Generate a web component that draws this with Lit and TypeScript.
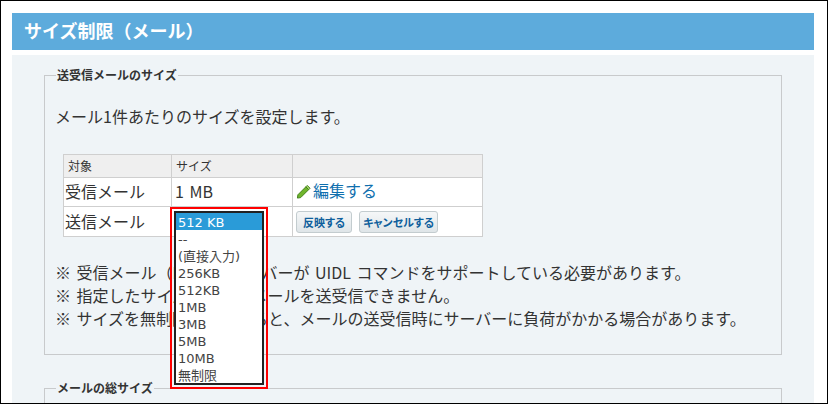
import { LitElement, html, css } from "lit";
import { customElement } from "lit/decorators.js";

const OPTIONS = ["--", "(直接入力)", "256KB", "512KB", "1MB", "3MB", "5MB", "10MB", "無制限"];

@customElement("app-root")
export class AppRoot extends LitElement {
  static styles = css`
    :host {
      display: block;
      width: 828px;
      height: 404px;
      box-sizing: border-box;
      border: 1px solid #000;
      background: #fff;
      overflow: hidden;
      font-family: "Noto Sans CJK JP", "Noto Sans", sans-serif;
      color: #333;
    }
    .wrap { padding: 12px 13px 0 11px; position: relative; }
    .title {
      background: #5dabdc;
      color: #fff;
      height: 37px;
      line-height: 35px;
      padding-left: 12px;
      font-size: 18px;
      font-weight: 700;
    }
    .panel {
      margin-top: 5px;
      background: #eff4f7;
      padding: 12px 32px 0 32px;
      height: 400px;
    }
    fieldset {
      margin: 0;
      padding: 0 10px;
      border: 1px solid #c8cacc;
      height: 288px;
      box-sizing: border-box;
    }
    fieldset + fieldset { margin-top: 25px; }
    legend {
      padding: 0 1px;
      margin-left: 1px;
      font-size: 12px;
      line-height: 16px;
      font-weight: 700;
      color: #333;
    }
    .desc { margin: 22px 0 0; font-size: 16px; line-height: 22px; }
    table {
      margin: 27px 0 0 8px;
      border-collapse: collapse;
      width: 420px;
      table-layout: fixed;
      background: #fff;
      font-size: 16px;
      word-spacing: 2px;
    }
    col.c1 { width: 108px; }
    col.c2 { width: 121px; }
    th, td {
      border: 1px solid #cfcfcf;
      padding: 0 0 0 3px;
      text-align: left;
      font-weight: 400;
      line-height: 18px;
    }
    th { background: #efefef; font-size: 12px; height: 22px; padding-left: 4px; }
    tr.r1 td { height: 26px; padding-bottom: 2px; }
    tr.r2 td { height: 29px; }
    tr.r2 td.name { height: 27px; padding-bottom: 2px; }
    td.name { padding-left: 1px; }
    .edit { color: #0f6fae; display: inline-flex; align-items: center; gap: 2px; }
    .edit svg { display: block; margin-top: 2px; }
    .btns { display: flex; gap: 7px; }
    button {
      font-family: inherit;
      font-size: 11px;
      font-feature-settings: "palt";
      font-weight: 700;
      color: #0f5f9c;
      height: 22px;
      width: 56px;
      margin: 0;
      padding: 0;
      border: 1px solid #c3cccf;
      border-radius: 3px;
      background: linear-gradient(#f5f7f8, #dfe5e8);
      line-height: 20px;
    }
    button.wide { width: 79px; }
    .notes { margin: 24px 0 0; padding: 0; list-style: none; font-size: 16px; line-height: 23px; word-spacing: 2px; }
    .notes li { white-space: nowrap; }
    .callout {
      position: absolute;
      left: 169px;
      top: 206px;
      width: 98px;
      height: 182px;
      box-sizing: border-box;
      border: 2px solid #f00;
      padding: 2px;
    }
    .list {
      box-sizing: border-box;
      height: 100%;
      border: 2px solid #222;
      background: #fff;
      font-family: "DejaVu Sans", "Noto Sans CJK JP", sans-serif;
      font-size: 13px;
      line-height: 19px;
      color: #444;
    }
    .list div { padding-left: 2px; height: 17px; white-space: nowrap; }
    .list .sel { background: #2a9bd8; color: #fff; }
  `;

  render() {
    return html`
      <div class="wrap">
        <div class="title">サイズ制限（メール）</div>
        <div class="panel">
          <fieldset>
            <legend>送受信メールのサイズ</legend>
            <p class="desc">メール1件あたりのサイズを設定します。</p>
            <table>
              <colgroup><col class="c1" /><col class="c2" /><col /></colgroup>
              <tr><th>対象</th><th>サイズ</th><th></th></tr>
              <tr class="r1">
                <td class="name">受信メール</td>
                <td>1 MB</td>
                <td>
                  <span class="edit">
                    <svg width="15" height="15" viewBox="0 0 16 16">
                      <path d="M2 11.5 10.5 3l3 3L5 14.5 1.5 15z" fill="#6fb52c" stroke="#3f7d17" stroke-width="1" />
                      <path d="M10.5 3l1.5-1.5 3 3L13.5 6z" fill="#a9d86e" stroke="#3f7d17" stroke-width="1" />
                    </svg>
                    編集する
                  </span>
                </td>
              </tr>
              <tr class="r2">
                <td class="name">送信メール</td>
                <td></td>
                <td>
                  <div class="btns"><button>反映する</button><button class="wide">キャンセルする</button></div>
                </td>
              </tr>
            </table>
            <ul class="notes">
              <li>※ 受信メール（POP3）サーバーが UIDL コマンドをサポートしている必要があります。</li>
              <li>※ 指定したサイズを超えるメールを送受信できません。</li>
              <li>※ サイズを無制限に設定すると、メールの送受信時にサーバーに負荷がかかる場合があります。</li>
            </ul>
          </fieldset>
          <fieldset>
            <legend>メールの総サイズ</legend>
          </fieldset>
        </div>
        <div class="callout">
          <div class="list">
            <div class="sel">512 KB</div>
            ${OPTIONS.map((o) => html`<div>${o}</div>`)}
          </div>
        </div>
      </div>
    `;
  }
}
